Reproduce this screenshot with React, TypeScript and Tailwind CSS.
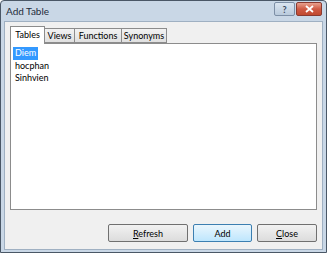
import React from "react";

export default function App() {
  const font = { fontFamily: 'Lato, "Noto Sans", sans-serif' };
  return (
    <div className="w-[327px] h-[253px] bg-white" style={font}>
      <div className="w-[327px] h-[253px] border border-[#4a5766] bg-[#c9d7e6] flex flex-col rounded-t-[4px]">
        {/* title bar */}
        <div className="h-[20px] flex items-center pl-[5px] pr-[4px] shrink-0">
          <span className="text-[10px] text-[#1e2b3a] leading-none">Add Table</span>
          <div className="ml-auto flex items-start h-full pt-[1px] gap-[1px]">
            <div className="w-[21px] h-[14px] border border-[#7d8fa6] rounded-[2px] bg-gradient-to-b from-[#dbe5f0] to-[#b9cadc] flex items-center justify-center">
              <span className="text-[9px] text-[#3a4a5e] leading-none font-bold">?</span>
            </div>
            <div className="w-[26px] h-[14px] border border-[#8a3a30] rounded-[2px] bg-gradient-to-b from-[#e7a08e] via-[#cf5a44] to-[#c04a30] flex items-center justify-center">
              <svg width="9" height="8" viewBox="0 0 9 8">
                <path d="M1 1 L8 7 M8 1 L1 7" stroke="#fff" strokeWidth="1.8" />
              </svg>
            </div>
          </div>
        </div>
        {/* client */}
        <div className="flex-1 mx-[3px] mb-[2px] bg-[#f0f0f0] border border-[#9fb0c2] flex flex-col px-[5px] pt-[3px]">
          {/* tabs */}
          <div className="flex items-end h-[18px] text-[9px] text-black">
            <div className="w-[35px] h-[18px] bg-white border border-b-0 border-[#8c8c8c] flex items-center justify-center relative z-10 -mb-px pb-[1px]">Tables</div>
            <div className="w-[30px] h-[15px] border border-l-0 border-[#8c8c8c] bg-gradient-to-b from-[#f2f2f2] to-[#e0e0e0] flex items-center justify-center">Views</div>
            <div className="w-[47px] h-[15px] border border-l-0 border-[#8c8c8c] bg-gradient-to-b from-[#f2f2f2] to-[#e0e0e0] flex items-center justify-center">Functions</div>
            <div className="w-[45px] h-[15px] border border-l-0 border-[#8c8c8c] bg-gradient-to-b from-[#f2f2f2] to-[#e0e0e0] flex items-center justify-center">Synonyms</div>
          </div>
          {/* panel */}
          <div className="h-[167px] bg-white border border-[#8c8c8c] p-[2px] flex flex-col text-[9px] leading-[12.5px]">
            <div className="flex flex-col pt-[1px]">
              <div><span className="bg-[#3399ff] text-white px-[2px] inline-block">Diem</span></div>
              <div className="px-[2px]">hocphan</div>
              <div className="px-[2px]">Sinhvien</div>
            </div>
          </div>
          {/* buttons */}
          <div className="flex justify-end gap-[5px] mt-[14px] text-[9px]">
            <button className="w-[80px] h-[18px] border border-[#707070] rounded-[2px] bg-gradient-to-b from-[#f2f2f2] to-[#dcdcdc] leading-none">
              <u>R</u>efresh
            </button>
            <button className="w-[59px] h-[18px] border border-[#3c7fb1] rounded-[2px] bg-gradient-to-b from-[#eaf6fd] to-[#bee6fd] leading-none">
              Add
            </button>
            <button className="w-[60px] h-[18px] border border-[#707070] rounded-[2px] bg-gradient-to-b from-[#f2f2f2] to-[#dcdcdc] leading-none">
              <u>C</u>lose
            </button>
          </div>
        </div>
      </div>
    </div>
  );
}
